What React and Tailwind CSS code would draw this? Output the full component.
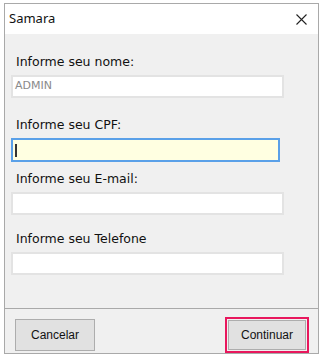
import React from 'react';

const Field = ({ label, value, active, top, width = 'w-[273px]' }) => (
    <div className={top}>
        <div className="pl-[5px] h-[16px] text-[12.5px] leading-[16px] text-[#111]" style={{ fontFamily: '"DejaVu Sans", sans-serif' }}>
            {label}
        </div>
        {active ? (
            <div className={`mt-[5px] ${width} h-[24px] border-2 border-[#5aa0e8] bg-[#ffffe1] flex items-center pl-[2px]`}>
                <div className="w-[2px] h-[13px] bg-[#333]"></div>
            </div>
        ) : (
            <div
                className={`mt-[5px] ${width} h-[23px] border-2 border-[#e3e3e3] bg-white flex items-center pl-[2px] text-[11px] text-[#8a8a8a]`}
                style={{ fontFamily: '"DejaVu Sans", sans-serif' }}
            >
                {value}
            </div>
        )}
    </div>
);

const App = () => {
    return (
        <div className="w-[325px] h-[359px] bg-white pl-[4px] pt-[3px]">
            <div className="w-[315px] h-[351px] border border-[#a9a9a9] flex flex-col">
                {/* Title bar */}
                <div className="h-[30px] bg-white flex items-center justify-between pl-[4px] pr-[11px]">
                    <span className="text-[13px] text-[#111]" style={{ fontFamily: '"Noto Sans", sans-serif' }}>Samara</span>
                    <svg width="11" height="11" viewBox="0 0 11 11">
                        <path d="M0.5 0.5 L10.5 10.5 M10.5 0.5 L0.5 10.5" stroke="#222" strokeWidth="1.1" />
                    </svg>
                </div>

                {/* Body */}
                <div className="flex-1 bg-[#f0f0f0] flex flex-col">
                    <div className="pl-[6px] pt-[20px] h-[274px]">
                        <Field label="Informe seu nome:" value="ADMIN" />
                        <Field label="Informe seu CPF:" active top="mt-[19px]" width="w-[269px]" />
                        <Field label="Informe seu E-mail:" top="mt-[9px]" />
                        <Field label="Informe seu Telefone" top="mt-[16px]" />
                    </div>
                    <div className="h-px bg-[#a9a9a9]"></div>
                    <div className="flex-1 flex justify-between items-start pl-[10px] pr-[9px] pt-[8px]" style={{ fontFamily: '"Liberation Sans", sans-serif' }}>
                        <button className="mt-[2px] w-[80px] h-[32px] bg-[#e1e1e1] border border-[#adadad] text-[12px] text-[#111]">
                            Cancelar
                        </button>
                        <div className="border-2 border-[#e8175d] p-px">
                            <button className="w-[78px] h-[30px] bg-[#e1e1e1] border border-[#adadad] text-[12px] text-[#111]">
                                Continuar
                            </button>
                        </div>
                    </div>
                </div>
            </div>
        </div>
    );
};

export default App;
